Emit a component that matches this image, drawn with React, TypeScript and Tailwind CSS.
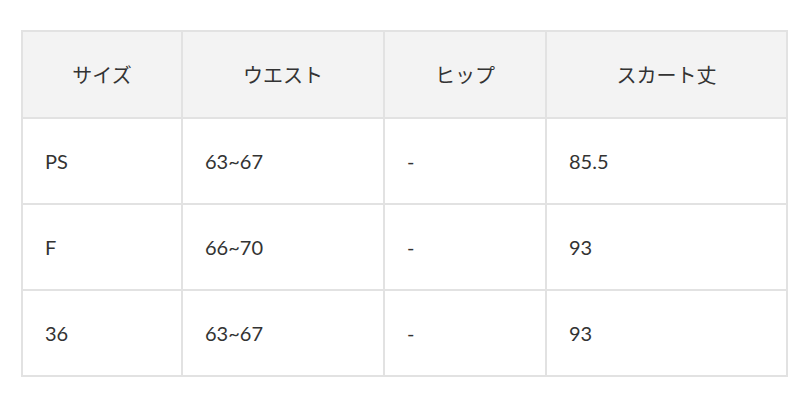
import React from "react";

const headers = ["サイズ", "ウエスト", "ヒップ", "スカート丈"];
const rows = [
  ["PS", "63~67", "-", "85.5"],
  ["F", "66~70", "-", "93"],
  ["36", "63~67", "-", "93"],
];
const widths = ["w-[160px]", "w-[202px]", "w-[162px]", "w-[241px]"];

export default function App() {
  return (
    <div
      className="w-[806px] h-[400px] bg-white pt-[30px] pl-[21px]"
      style={{ fontFamily: 'Lato, "Noto Sans CJK JP", sans-serif' }}
    >
      <table className="border-collapse table-fixed w-[765px] text-[20px] text-[#333]">
        <colgroup>
          {widths.map((w, i) => (
            <col key={i} className={w} />
          ))}
        </colgroup>
        <thead>
          <tr className="h-[87px] bg-[#f3f3f3]">
            {headers.map((h) => (
              <th key={h} className="border-2 border-[#e2e2e2] font-normal text-center align-middle p-0">
                {h}
              </th>
            ))}
          </tr>
        </thead>
        <tbody>
          {rows.map((r, i) => (
            <tr key={i} className="h-[86px]">
              {r.map((c, j) => (
                <td key={j} className="border-2 border-[#e2e2e2] text-left pl-[22px] py-0 align-middle">
                  {c}
                </td>
              ))}
            </tr>
          ))}
        </tbody>
      </table>
    </div>
  );
}
